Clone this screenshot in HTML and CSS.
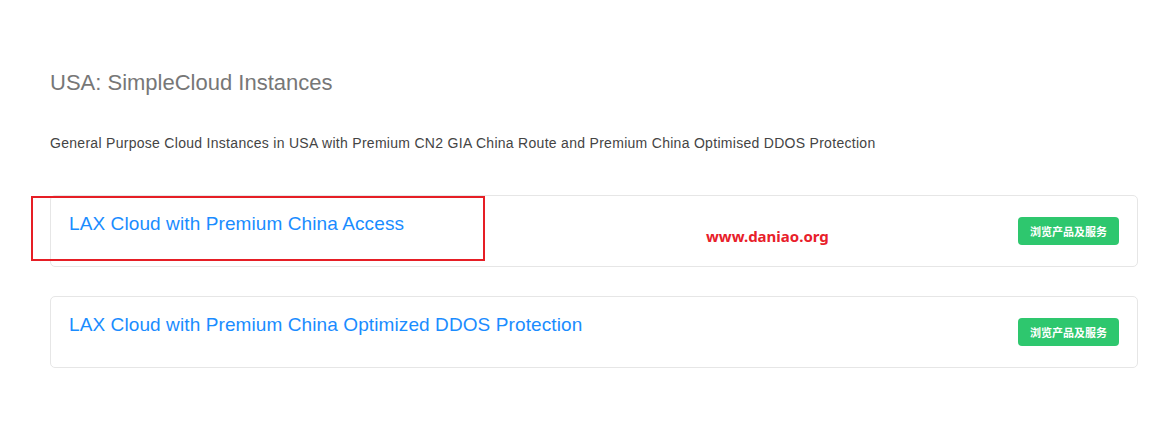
FILE: index.html
```html
<!DOCTYPE html>
<html>
<head>
<meta charset="utf-8">
<link rel="stylesheet" href="styles.css">
</head>
<body>
<div class="page">
  <h1 class="heading">USA: SimpleCloud Instances</h1>
  <p class="desc">General Purpose Cloud Instances in USA with Premium CN2 GIA China Route and Premium China Optimised DDOS Protection</p>
  <div class="list">
    <div class="card">
      <a class="title">LAX Cloud with Premium China Access</a>
      <span class="watermark">www.daniao.org</span>
      <a class="btn">浏览产品及服务</a>
      <div class="mark"></div>
    </div>
    <div class="card">
      <a class="title">LAX Cloud with Premium China Optimized DDOS Protection</a>
      <a class="btn">浏览产品及服务</a>
    </div>
  </div>
</div>
</body>
</html>
```

FILE: styles.css
```css
html, body {
  margin: 0;
  padding: 0;
  background: #fff;
}
body {
  font-family: "Liberation Sans", Arial, sans-serif;
}
.page {
  padding: 69px 37px 0 50px;
}
.heading {
  margin: 0;
  font-size: 22px;
  font-weight: normal;
  color: #777;
  line-height: 28px;
}
.desc {
  margin: 36px 0 0;
  font-size: 14px;
  letter-spacing: 0.29px;
  color: #444;
  line-height: 20px;
}
.list {
  margin-top: 42px;
  display: flex;
  flex-direction: column;
  gap: 29px;
}
.card {
  position: relative;
  height: 70px;
  border: 1px solid #e6e6e6;
  border-radius: 5px;
  padding: 0 18px;
  display: flex;
  align-items: flex-start;
}
.title {
  margin-top: 17px;
  font-size: 19px;
  letter-spacing: 0.1px;
  line-height: 22px;
  color: #1a8cff;
  flex: 1;
}
.watermark {
  position: absolute;
  left: 655px;
  top: 30px;
  font-family: "Noto Sans", "Liberation Sans", sans-serif;
  font-weight: bold;
  font-size: 15px;
  color: #e8202a;
}
.btn {
  margin-top: 21px;
  width: 101px;
  height: 28px;
  border-radius: 4px;
  background: #2ec76e;
  color: #fff;
  font-family: "Noto Sans CJK SC", sans-serif;
  font-size: 11px;
  font-weight: bold;
  display: flex;
  align-items: center;
  justify-content: center;
}
.mark {
  position: absolute;
  left: -20px;
  top: 0;
  width: 450px;
  height: 61px;
  border: 2px solid #e61e25;
}
```
